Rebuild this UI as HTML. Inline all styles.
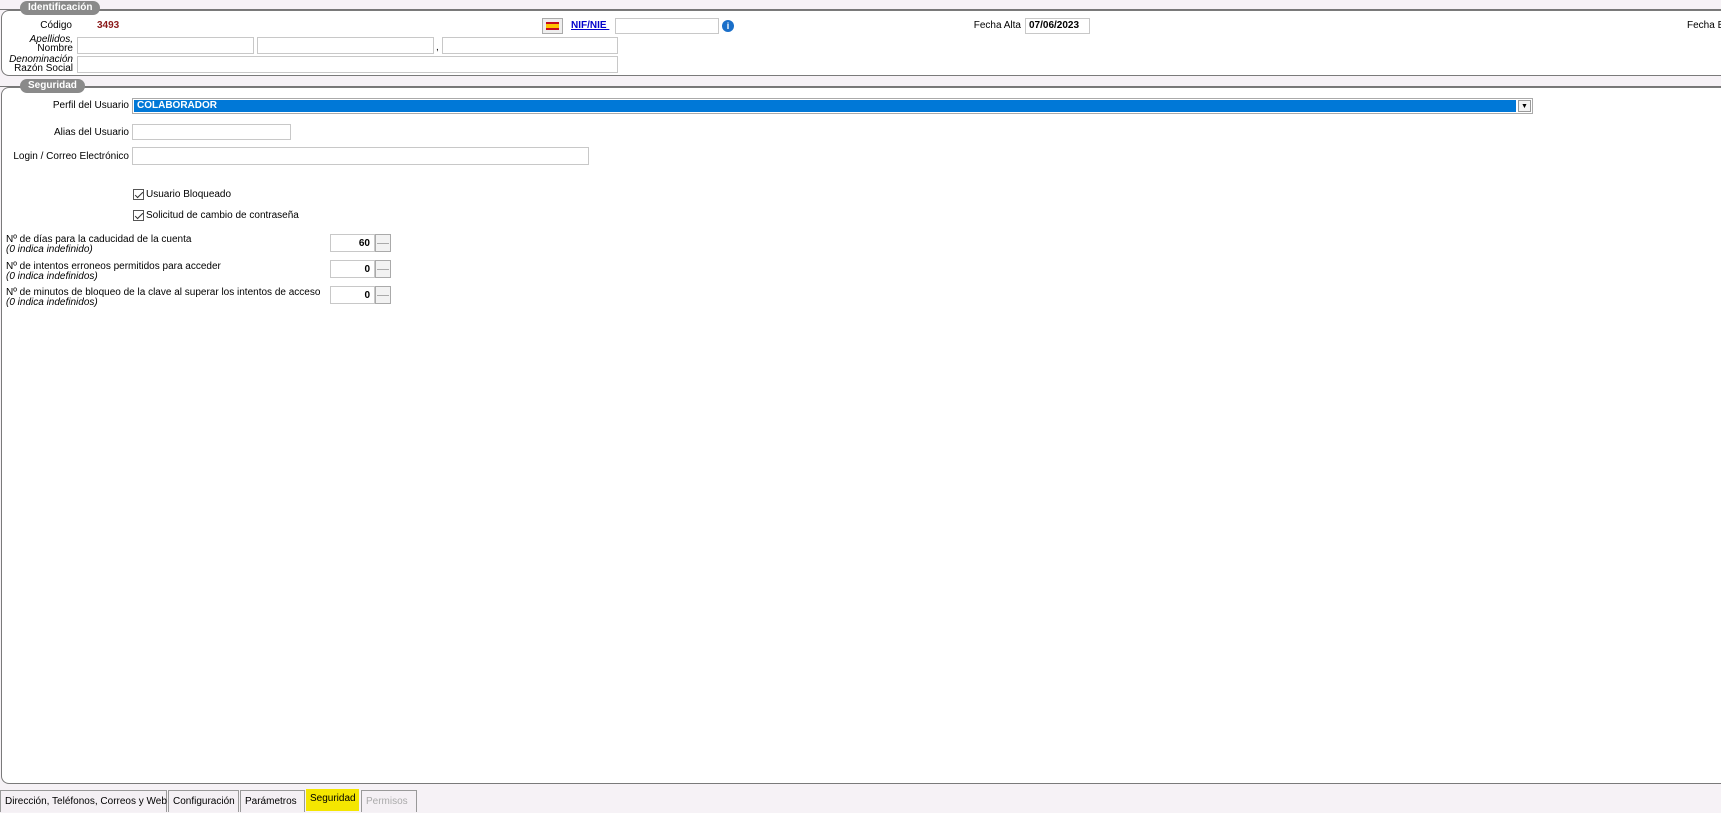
<!DOCTYPE html>
<html><head><meta charset="utf-8"><style>
*{box-sizing:border-box;margin:0;padding:0}
body{width:1721px;height:813px;background:#f6f2f6;font-family:"Liberation Sans",Arial,sans-serif;font-size:10px;color:#000;position:relative;overflow:hidden;white-space:nowrap}
.a{position:absolute}
.frame{position:absolute;background:#fff;border:1px solid #7a7a7a;border-right:none;border-radius:8px 0 0 8px}
.pill{position:absolute;background:#8a8a8a;color:#fff;font-weight:bold;font-size:10px;border-radius:8px;padding:0 8px;height:14px;line-height:14px}
.in{position:absolute;background:#fff;border:1px solid #c8c8c8}
.r{text-align:right}
.cb{position:absolute;width:11px;height:11px;border:1px solid #555;background:#fff}
.cb:after{content:"";position:absolute;left:3px;top:0px;width:3px;height:7px;border:solid #333;border-width:0 1px 1px 0;transform:rotate(45deg)}
.spin{position:absolute;width:16px;border:1px solid #aaa;background:#f2f2f2}
.spin:before{content:"";position:absolute;left:1px;right:1px;top:50%;height:1px;background:#aaa}
.tab{position:absolute;top:790px;height:22px;border:1px solid #999;border-bottom:none;background:#f4f0f4;padding:0 4px;line-height:22px;font-size:10px}
</style></head><body>
<div class="a" style="left:0;top:9px;width:1721px;height:1px;background:#777"></div>
<div class="frame" style="left:1px;top:10px;width:1720px;height:66px"></div>
<div class="pill" style="left:20px;top:1px">Identificación</div>
<div class="a r" style="left:0;top:20px;width:72px">Código</div>
<div class="a" style="left:97px;top:20px;color:#8b1a1a;font-weight:bold">3493</div>
<div class="a" style="left:542px;top:18px;width:21px;height:16px;border:1px solid #aaa;background:#eee"><div style="margin:3px 3px;width:13px;height:8px;background:linear-gradient(#c60b1e 25%,#ffc400 25%,#ffc400 75%,#c60b1e 75%)"></div></div>
<div class="a" style="left:571px;top:20px;color:#00c;font-weight:bold;text-decoration:underline">NIF/NIE&nbsp;</div>
<div class="in" style="left:615px;top:18px;width:104px;height:16px"></div>
<div class="a" style="left:722px;top:20px;width:12px;height:12px;border-radius:50%;background:#1a6fc9;color:#fff;font-size:9px;font-weight:bold;text-align:center;line-height:12px">i</div>
<div class="a r" style="left:900px;top:20px;width:121px">Fecha Alta</div>
<div class="in" style="left:1025px;top:18px;width:65px;height:16px;font-weight:bold;padding:1px 3px">07/06/2023</div>
<div class="a" style="left:1687px;top:20px">Fecha B</div>
<div class="a r" style="left:0;top:35px;width:73px;line-height:9px;font-style:italic">Apellidos,</div>
<div class="a r" style="left:0;top:44px;width:73px;line-height:9px">Nombre</div>
<div class="in" style="left:77px;top:37px;width:177px;height:17px"></div>
<div class="in" style="left:257px;top:37px;width:177px;height:17px"></div>
<div class="a" style="left:436px;top:42px">,</div>
<div class="in" style="left:442px;top:37px;width:176px;height:17px"></div>
<div class="a r" style="left:0;top:55px;width:73px;line-height:9px;font-style:italic">Denominación</div>
<div class="a r" style="left:0;top:64px;width:73px;line-height:9px">Razón Social</div>
<div class="in" style="left:77px;top:56px;width:541px;height:17px"></div>

<div class="a" style="left:0;top:86px;width:1721px;height:1px;background:#777"></div>
<div class="frame" style="left:1px;top:87px;width:1720px;height:697px"></div>
<div class="pill" style="left:20px;top:79px">Seguridad</div>
<div class="a r" style="left:0;top:100px;width:129px">Perfil del Usuario</div>
<div class="a" style="left:132px;top:98px;width:1401px;height:16px;border:1px solid #aaa;background:#fff">
<div style="position:absolute;left:1px;top:1px;right:16px;bottom:1px;background:#0078d7;color:#fff;padding-left:3px;line-height:12px;font-weight:bold">COLABORADOR</div>
<div style="position:absolute;right:1px;top:1px;width:13px;bottom:1px;border:1px solid #999;background:#f3f3f3;font-size:7px;text-align:center;line-height:11px">▼</div></div>
<div class="a r" style="left:0;top:127px;width:129px">Alias del Usuario</div>
<div class="in" style="left:132px;top:124px;width:159px;height:16px"></div>
<div class="a r" style="left:0;top:151px;width:129px">Login / Correo Electrónico</div>
<div class="in" style="left:132px;top:147px;width:457px;height:18px"></div>
<div class="cb" style="left:133px;top:189px"></div><div class="a" style="left:146px;top:189px">Usuario Bloqueado</div>
<div class="cb" style="left:133px;top:210px"></div><div class="a" style="left:146px;top:210px">Solicitud de cambio de contraseña</div>

<div class="a" style="left:6px;top:235px;line-height:10px">Nº de días para la caducidad de la cuenta<br><i>(0 indica indefinido)</i></div>
<div class="in" style="left:330px;top:234px;width:45px;height:18px;text-align:right;font-weight:bold;padding:3px 4px 0 0">60</div>
<div class="spin" style="left:375px;top:234px;height:18px"></div>
<div class="a" style="left:6px;top:262px;line-height:10px">Nº de intentos erroneos permitidos para acceder<br><i>(0 indica indefinidos)</i></div>
<div class="in" style="left:330px;top:260px;width:45px;height:18px;text-align:right;font-weight:bold;padding:3px 4px 0 0">0</div>
<div class="spin" style="left:375px;top:260px;height:18px"></div>
<div class="a" style="left:6px;top:288px;line-height:10px">Nº de minutos de bloqueo de la clave al superar los intentos de acceso<br><i>(0 indica indefinidos)</i></div>
<div class="in" style="left:330px;top:286px;width:45px;height:18px;text-align:right;font-weight:bold;padding:3px 4px 0 0">0</div>
<div class="spin" style="left:375px;top:286px;height:18px"></div>

<div class="tab" style="left:0;width:167px">Dirección, Teléfonos, Correos y Web</div>
<div class="tab" style="left:168px;width:71px">Configuración</div>
<div class="tab" style="left:240px;width:65px">Parámetros</div>
<div class="a" style="left:306px;top:789px;width:53px;height:22px;background:#f4e600;line-height:20px;padding-left:4px">Seguridad</div>
<div class="tab" style="left:361px;width:56px;color:#aaa">Permisos</div>
</body></html>
